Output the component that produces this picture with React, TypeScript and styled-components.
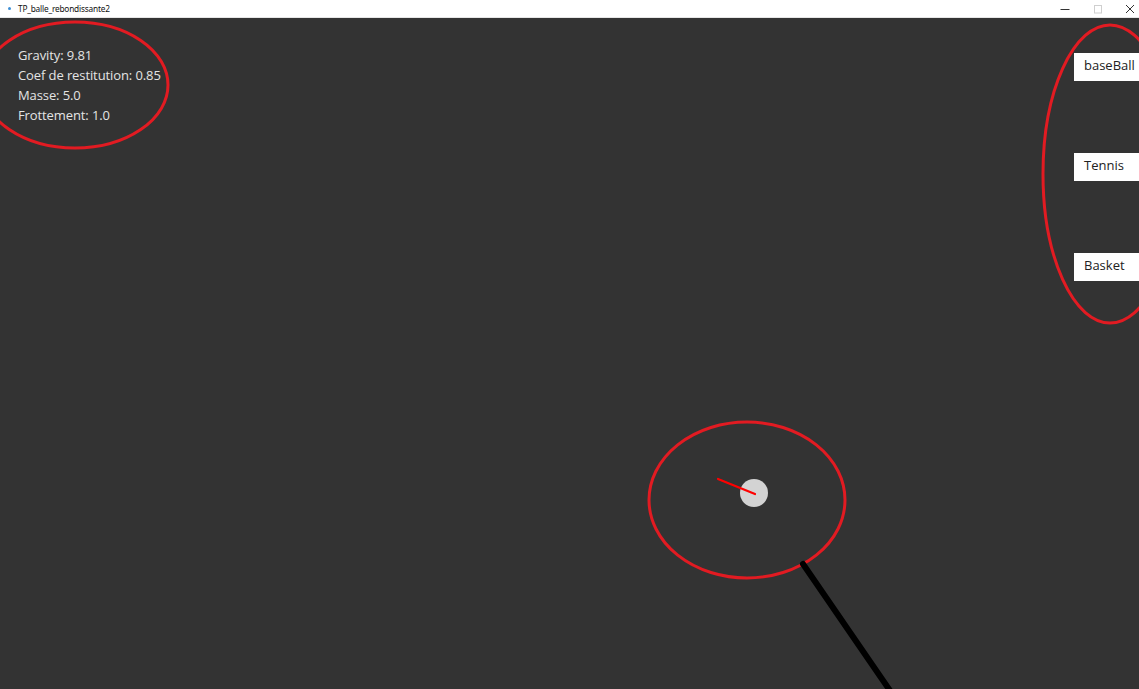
import React from "react";
import styled, { createGlobalStyle } from "styled-components";

const Global = createGlobalStyle`
  html, body { margin: 0; padding: 0; width: 1139px; height: 689px; overflow: hidden; }
  body { font-family: "Open Sans", "Noto Sans", sans-serif; }
  #root { width: 1139px; height: 689px; }
`;

const Window = styled.div`
  width: 1139px;
  height: 689px;
  display: flex;
  flex-direction: column;
  background: #333333;
`;

const TitleBar = styled.div`
  height: 18px;
  flex: 0 0 18px;
  background: #ffffff;
  display: flex;
  align-items: center;
  box-sizing: border-box;
  border-bottom: 1px solid #e6e6e6;
`;

const AppIcon = styled.span`
  width: 3px;
  height: 3px;
  border-radius: 50%;
  background: #3d8fd6;
  margin: 0 7px 0 8px;
`;

const Title = styled.span`
  font-family: "Noto Sans", "Open Sans", sans-serif;
  font-size: 8.3px;
  color: #111;
  letter-spacing: -0.2px;
  flex: 1;
`;

const Controls = styled.div`
  display: flex;
  height: 100%;
  gap: 14.5px;
`;

const Ctrl = styled.span`
  width: 18px;
  display: flex;
  align-items: center;
  justify-content: center;
`;

const Canvas = styled.div`
  position: relative;
  flex: 1;
  display: flex;
  justify-content: space-between;
  overflow: hidden;
`;

const Stats = styled.div`
  padding: 27px 0 0 18px;
  display: flex;
  flex-direction: column;
  color: #e4e4e4;
  font-family: "Open Sans", "Noto Sans", sans-serif;
  font-size: 13px;
  line-height: 20px;
  letter-spacing: -0.1px;
`;

const Buttons = styled.div`
  display: flex;
  flex-direction: column;
  gap: 72px;
  padding-top: 35px;
  margin-right: -12px;
`;

const BallButton = styled.button`
  width: 77px;
  height: 28px;
  background: #ffffff;
  border: none;
  margin: 0;
  padding: 0 0 5px 10px;
  text-align: left;
  font-family: "Open Sans", "Noto Sans", sans-serif;
  font-size: 13px;
  color: #222;
  box-sizing: border-box;
`;

const Overlay = styled.svg`
  position: absolute;
  inset: 0;
  pointer-events: none;
`;

const RED = "#e21b22";

export default function App() {
  const oy = 18;
  return (
    <>
      <Global />
      <Window>
        <TitleBar>
          <AppIcon />
          <Title>TP_balle_rebondissante2</Title>
          <Controls>
            <Ctrl>
              <svg width="10" height="10" viewBox="0 0 10 10">
                <line x1="0.5" y1="5.5" x2="9.5" y2="5.5" stroke="#333" strokeWidth="1" />
              </svg>
            </Ctrl>
            <Ctrl>
              <svg width="10" height="10" viewBox="0 0 10 10">
                <rect x="1.5" y="1.5" width="7" height="7.5" fill="none" stroke="#cfcfcf" strokeWidth="1" />
              </svg>
            </Ctrl>
            <Ctrl>
              <svg width="10" height="10" viewBox="0 0 10 10">
                <path d="M1 1 L9 9 M9 1 L1 9" stroke="#333" strokeWidth="1" />
              </svg>
            </Ctrl>
          </Controls>
        </TitleBar>
        <Canvas>
          <Overlay width="1139" height="671" viewBox={`0 ${oy} 1139 671`}>
            <ellipse cx="75" cy="85" rx="93" ry="63" fill="none" stroke={RED} strokeWidth="3" />
            <ellipse cx="1110" cy="174" rx="67" ry="149" fill="none" stroke={RED} strokeWidth="3" />
            <ellipse cx="747" cy="500" rx="98" ry="78" fill="none" stroke={RED} strokeWidth="3" />
            <line x1="803" y1="564" x2="893" y2="695" stroke="#000" strokeWidth="6" strokeLinecap="round" />
            <circle cx="754" cy="493" r="14" fill="#d3d3d3" />
            <line x1="718" y1="479" x2="755" y2="494" stroke="#ff0000" strokeWidth="2.2" strokeLinecap="round" />
          </Overlay>
          <Stats>
            <span>Gravity: 9.81</span>
            <span>Coef de restitution: 0.85</span>
            <span>Masse: 5.0</span>
            <span>Frottement: 1.0</span>
          </Stats>
          <Buttons>
            <BallButton>baseBall</BallButton>
            <BallButton>Tennis</BallButton>
            <BallButton>Basket</BallButton>
          </Buttons>
        </Canvas>
      </Window>
    </>
  );
}
